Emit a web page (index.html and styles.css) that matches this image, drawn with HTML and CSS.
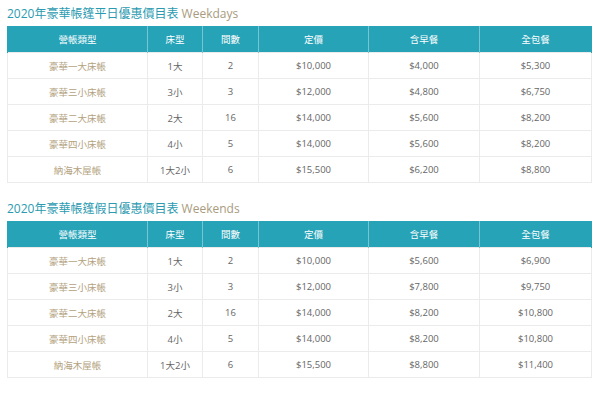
FILE: index.html
```html
<!DOCTYPE html>
<html lang="zh-Hant">
<head>
<meta charset="utf-8">
<link rel="stylesheet" href="styles.css">
</head>
<body>
<div class="page">
  <section class="block">
    <h2 class="title">2020年豪華帳篷平日優惠價目表 <span class="en">Weekdays</span></h2>
    <table class="price">
      <colgroup><col class="c1"><col class="c2"><col class="c3"><col class="c4"><col class="c5"><col class="c6"></colgroup>
      <thead><tr><th>營帳類型</th><th>床型</th><th>間數</th><th>定價</th><th>含早餐</th><th>全包餐</th></tr></thead>
      <tbody>
        <tr><td class="name">豪華一大床帳</td><td>1大</td><td>2</td><td>$10,000</td><td>$4,000</td><td>$5,300</td></tr>
        <tr><td class="name">豪華三小床帳</td><td>3小</td><td>3</td><td>$12,000</td><td>$4,800</td><td>$6,750</td></tr>
        <tr><td class="name">豪華二大床帳</td><td>2大</td><td>16</td><td>$14,000</td><td>$5,600</td><td>$8,200</td></tr>
        <tr><td class="name">豪華四小床帳</td><td>4小</td><td>5</td><td>$14,000</td><td>$5,600</td><td>$8,200</td></tr>
        <tr><td class="name">納海木屋帳</td><td>1大2小</td><td>6</td><td>$15,500</td><td>$6,200</td><td>$8,800</td></tr>
      </tbody>
    </table>
  </section>
  <section class="block">
    <h2 class="title">2020年豪華帳篷假日優惠價目表 <span class="en">Weekends</span></h2>
    <table class="price">
      <colgroup><col class="c1"><col class="c2"><col class="c3"><col class="c4"><col class="c5"><col class="c6"></colgroup>
      <thead><tr><th>營帳類型</th><th>床型</th><th>間數</th><th>定價</th><th>含早餐</th><th>全包餐</th></tr></thead>
      <tbody>
        <tr><td class="name">豪華一大床帳</td><td>1大</td><td>2</td><td>$10,000</td><td>$5,600</td><td>$6,900</td></tr>
        <tr><td class="name">豪華三小床帳</td><td>3小</td><td>3</td><td>$12,000</td><td>$7,800</td><td>$9,750</td></tr>
        <tr><td class="name">豪華二大床帳</td><td>2大</td><td>16</td><td>$14,000</td><td>$8,200</td><td>$10,800</td></tr>
        <tr><td class="name">豪華四小床帳</td><td>4小</td><td>5</td><td>$14,000</td><td>$8,200</td><td>$10,800</td></tr>
        <tr><td class="name">納海木屋帳</td><td>1大2小</td><td>6</td><td>$15,500</td><td>$8,800</td><td>$11,400</td></tr>
      </tbody>
    </table>
  </section>
</div>
</body>
</html>
```
FILE: styles.css
```css
html, body {
  margin: 0;
  padding: 0;
  background: #ffffff;
}
.page {
  padding: 0 9px 0 7px;
  font-family: "Open Sans", "Noto Sans CJK TC", sans-serif;
}
.block + .block {
  margin-top: 12px;
}
.title {
  margin: 0;
  padding-top: 2px;
  height: 24px;
  line-height: 24px;
  font-size: 12px;
  font-weight: normal;
  color: #2b9ab0;
  white-space: nowrap;
}
.title .en {
  color: #a99b7e;
}
.price {
  width: 584px;
  border-collapse: collapse;
  table-layout: fixed;
  font-size: 9.5px;
}
.c1 { width: 140px; }
.c2 { width: 55px; }
.c3 { width: 56px; }
.c4 { width: 110px; }
.c5 { width: 111px; }
.c6 { width: 112px; }
.price th {
  height: 26px;
  padding: 0;
  background: #26a3b7;
  color: #ffffff;
  font-weight: normal;
  text-align: center;
  border-left: 1px solid #74c6d3;
  border-right: 1px solid #74c6d3;
}
.price th:first-child { border-left-color: #26a3b7; }
.price th:last-child { border-right-color: #26a3b7; }
.price td {
  height: 25px;
  padding: 0;
  text-align: center;
  color: #666666;
  border: 1px solid #ebebeb;
}
.price td.name {
  color: #b3a27e;
}
```
